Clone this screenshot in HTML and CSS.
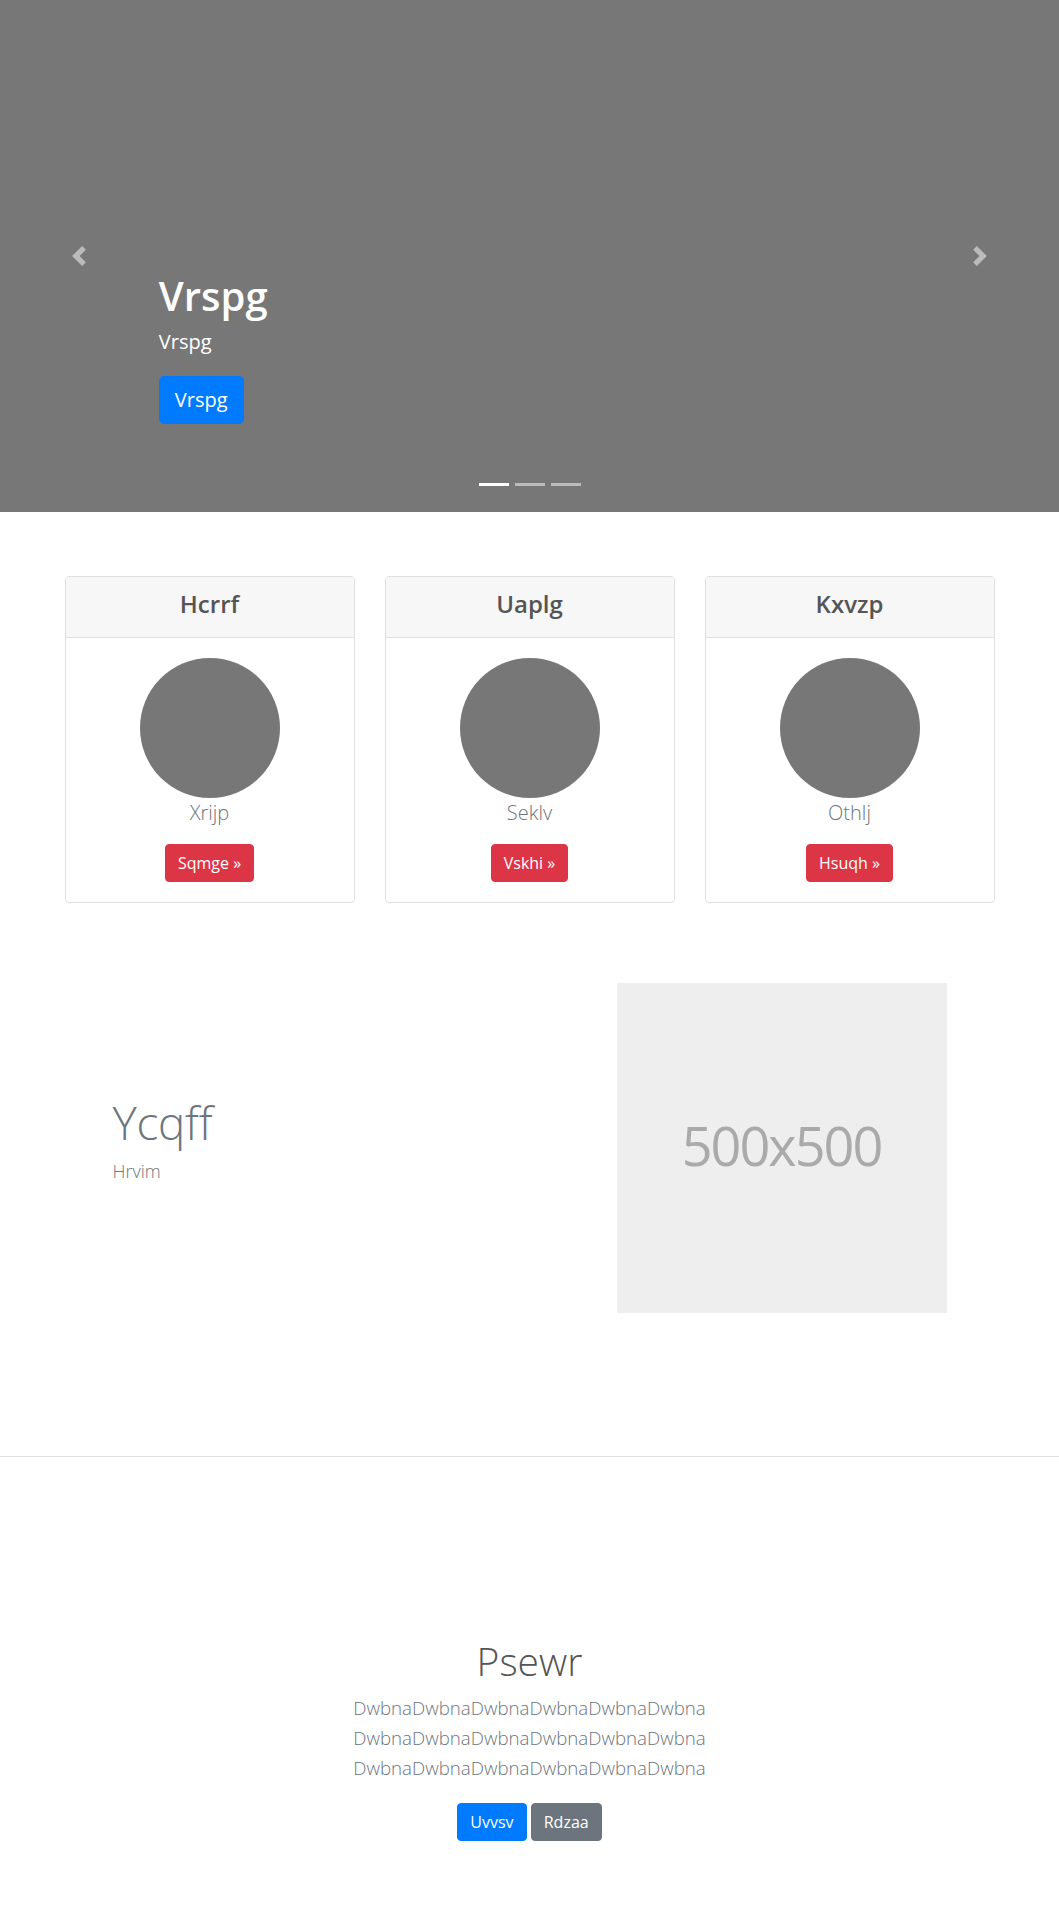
FILE: index.html
```html
<!DOCTYPE html>
<html lang="en">
<head>
<meta charset="utf-8">
<title>Page</title>
<link rel="stylesheet" href="styles.css">
</head>
<body>
<div class="hero">
  <a class="hero-control hero-prev" href="#">
    <svg width="20" height="20" viewBox="0 0 8 8"><path fill="#fff" d="M5.25 0l-4 4 4 4 1.5-1.5-2.5-2.5 2.5-2.5-1.5-1.5z"/></svg>
  </a>
  <a class="hero-control hero-next" href="#">
    <svg width="20" height="20" viewBox="0 0 8 8"><path fill="#fff" d="M2.75 0l-1.5 1.5 2.5 2.5-2.5 2.5 1.5 1.5 4-4-4-4z"/></svg>
  </a>
  <div class="hero-caption">
    <h1 class="hero-title">Vrspg</h1>
    <p class="hero-text">Vrspg</p>
    <div class="hero-actions"><a class="btn btn-lg btn-primary" href="#">Vrspg</a></div>
  </div>
  <ol class="hero-indicators">
    <li class="active"></li>
    <li></li>
    <li></li>
  </ol>
</div>

<div class="container">
  <div class="cards">
    <div class="card">
      <div class="card-header"><h4 class="card-title">Hcrrf</h4></div>
      <div class="card-body">
        <div class="avatar"></div>
        <p class="card-text">Xrijp</p>
        <a class="btn btn-danger" href="#">Sqmge »</a>
      </div>
    </div>
    <div class="card">
      <div class="card-header"><h4 class="card-title">Uaplg</h4></div>
      <div class="card-body">
        <div class="avatar"></div>
        <p class="card-text">Seklv</p>
        <a class="btn btn-danger" href="#">Vskhi »</a>
      </div>
    </div>
    <div class="card">
      <div class="card-header"><h4 class="card-title">Kxvzp</h4></div>
      <div class="card-body">
        <div class="avatar"></div>
        <p class="card-text">Othlj</p>
        <a class="btn btn-danger" href="#">Hsuqh »</a>
      </div>
    </div>
  </div>

  <div class="feature">
    <div class="feature-row">
      <div class="feature-text">
        <h2 class="feature-heading">Ycqff</h2>
        <p class="feature-lead">Hrvim</p>
      </div>
      <div class="feature-media">
        <div class="placeholder">500x500</div>
      </div>
    </div>
  </div>
</div>

<hr class="divider">

<section class="cta">
  <h1 class="cta-heading">Psewr</h1>
  <p class="cta-lead">DwbnaDwbnaDwbnaDwbnaDwbnaDwbna<br>DwbnaDwbnaDwbnaDwbnaDwbnaDwbna<br>DwbnaDwbnaDwbnaDwbnaDwbnaDwbna</p>
  <p class="cta-actions"><a class="btn btn-primary" href="#">Uvvsv</a> <a class="btn btn-secondary" href="#">Rdzaa</a></p>
</section>
</body>
</html>
```

FILE: styles.css
```css
* { box-sizing: border-box; }

body {
  margin: 0;
  font-family: "Open Sans", "Noto Sans", sans-serif;
  font-size: 16px;
  line-height: 1.5;
  color: #212529;
  background: #fff;
}

a { text-decoration: none; }

/* Buttons */
.btn {
  display: inline-block;
  font-size: 16px;
  line-height: 24px;
  padding: 6px 12px;
  border: 1px solid transparent;
  border-radius: 4px;
  color: #fff;
  font-weight: 400;
  text-align: center;
  vertical-align: middle;
}
.btn-lg {
  font-size: 20px;
  line-height: 30px;
  padding: 8px 15px;
  border-radius: 5px;
}
.btn-primary { background: #007bff; border-color: #007bff; }
.btn-danger { background: #dc3545; border-color: #dc3545; }
.btn-secondary { background: #6c757d; border-color: #6c757d; }

/* Hero */
.hero {
  position: relative;
  height: 512px;
  background: #777;
  margin-bottom: 64px;
  overflow: hidden;
}
.hero-control {
  position: absolute;
  top: 0;
  bottom: 0;
  width: 15%;
  display: flex;
  align-items: center;
  justify-content: center;
  opacity: 0.5;
}
.hero-control svg { display: block; }
.hero-prev { left: 0; }
.hero-next { right: 0; }

.hero-caption {
  position: absolute;
  left: 15%;
  right: 15%;
  bottom: 48px;
  padding: 20px 0;
  color: #fff;
}
.hero-title {
  margin: 0 0 8px;
  font-size: 40px;
  line-height: 48px;
  font-weight: 600;
}
.hero-text {
  margin: 0 0 20px;
  font-size: 20px;
  line-height: 28px;
  font-weight: 500;
}
.hero-actions {
  display: flex;
  margin-bottom: 20px;
}

.hero-indicators {
  position: absolute;
  left: 0;
  right: 0;
  bottom: 0;
  margin: 0 0 16px;
  padding: 0;
  list-style: none;
  display: flex;
  justify-content: center;
}
.hero-indicators li {
  width: 30px;
  height: 3px;
  margin: 10px 3px;
  background: rgba(255, 255, 255, 0.5);
}
.hero-indicators li.active { background: #fff; }

/* Container */
.container {
  max-width: 960px;
  margin: 0 auto;
  padding: 0 15px;
}

/* Cards */
.cards {
  display: grid;
  grid-template-columns: repeat(3, 1fr);
  column-gap: 30px;
}
.card {
  border: 1px solid #dfdfdf;
  border-radius: 4px;
  text-align: center;
  overflow: hidden;
}
.card-header {
  background: #f7f7f7;
  border-bottom: 1px solid #dfdfdf;
  padding: 9px 20px 15px;
}
.card-title {
  margin: 0;
  font-size: 24px;
  line-height: 36px;
  font-weight: 600;
  color: #555;
}
.card-body {
  padding: 20px;
  display: flex;
  flex-direction: column;
  align-items: center;
}
.avatar {
  width: 140px;
  height: 140px;
  border-radius: 50%;
  background: #777;
}
.card-text {
  margin: 0 0 16px;
  font-size: 20px;
  line-height: 30px;
  font-weight: 300;
  color: #6c757d;
}

/* Feature */
.feature {
  margin-top: 32px;
  padding: 48px;
}
.feature-row {
  display: grid;
  grid-template-columns: minmax(0, 474fr) minmax(0, 330fr);
  column-gap: 30px;
  align-items: center;
}
.feature-heading {
  margin: 0 0 8px;
  font-size: 46px;
  line-height: 55px;
  font-weight: 300;
  color: #6c757d;
  letter-spacing: -0.3px;
}
.feature-lead {
  margin: 0 0 16px;
  font-size: 18px;
  line-height: 27px;
  font-weight: 300;
  color: #6c757d;
}
.placeholder {
  width: 100%;
  aspect-ratio: 1 / 1;
  background: #eee;
  color: #aaa;
  display: flex;
  align-items: center;
  justify-content: center;
  font-size: 54px;
  letter-spacing: -2px;
  padding-bottom: 6px;
}

/* Divider */
.divider {
  margin: 95px 0 0;
  border: 0;
  border-top: 1px solid #e0e0e0;
  height: 0;
}

/* CTA */
.cta {
  text-align: center;
  padding: 180px 15px 80px;
}
.cta-heading {
  margin: 0 0 8px;
  font-size: 39px;
  line-height: 48px;
  font-weight: 300;
  color: #555;
}
.cta-lead {
  margin: 0 0 20px;
  font-size: 18.7px;
  line-height: 30px;
  font-weight: 300;
  color: #6c757d;
}
.cta-actions {
  margin: 8px 0;
}
```
